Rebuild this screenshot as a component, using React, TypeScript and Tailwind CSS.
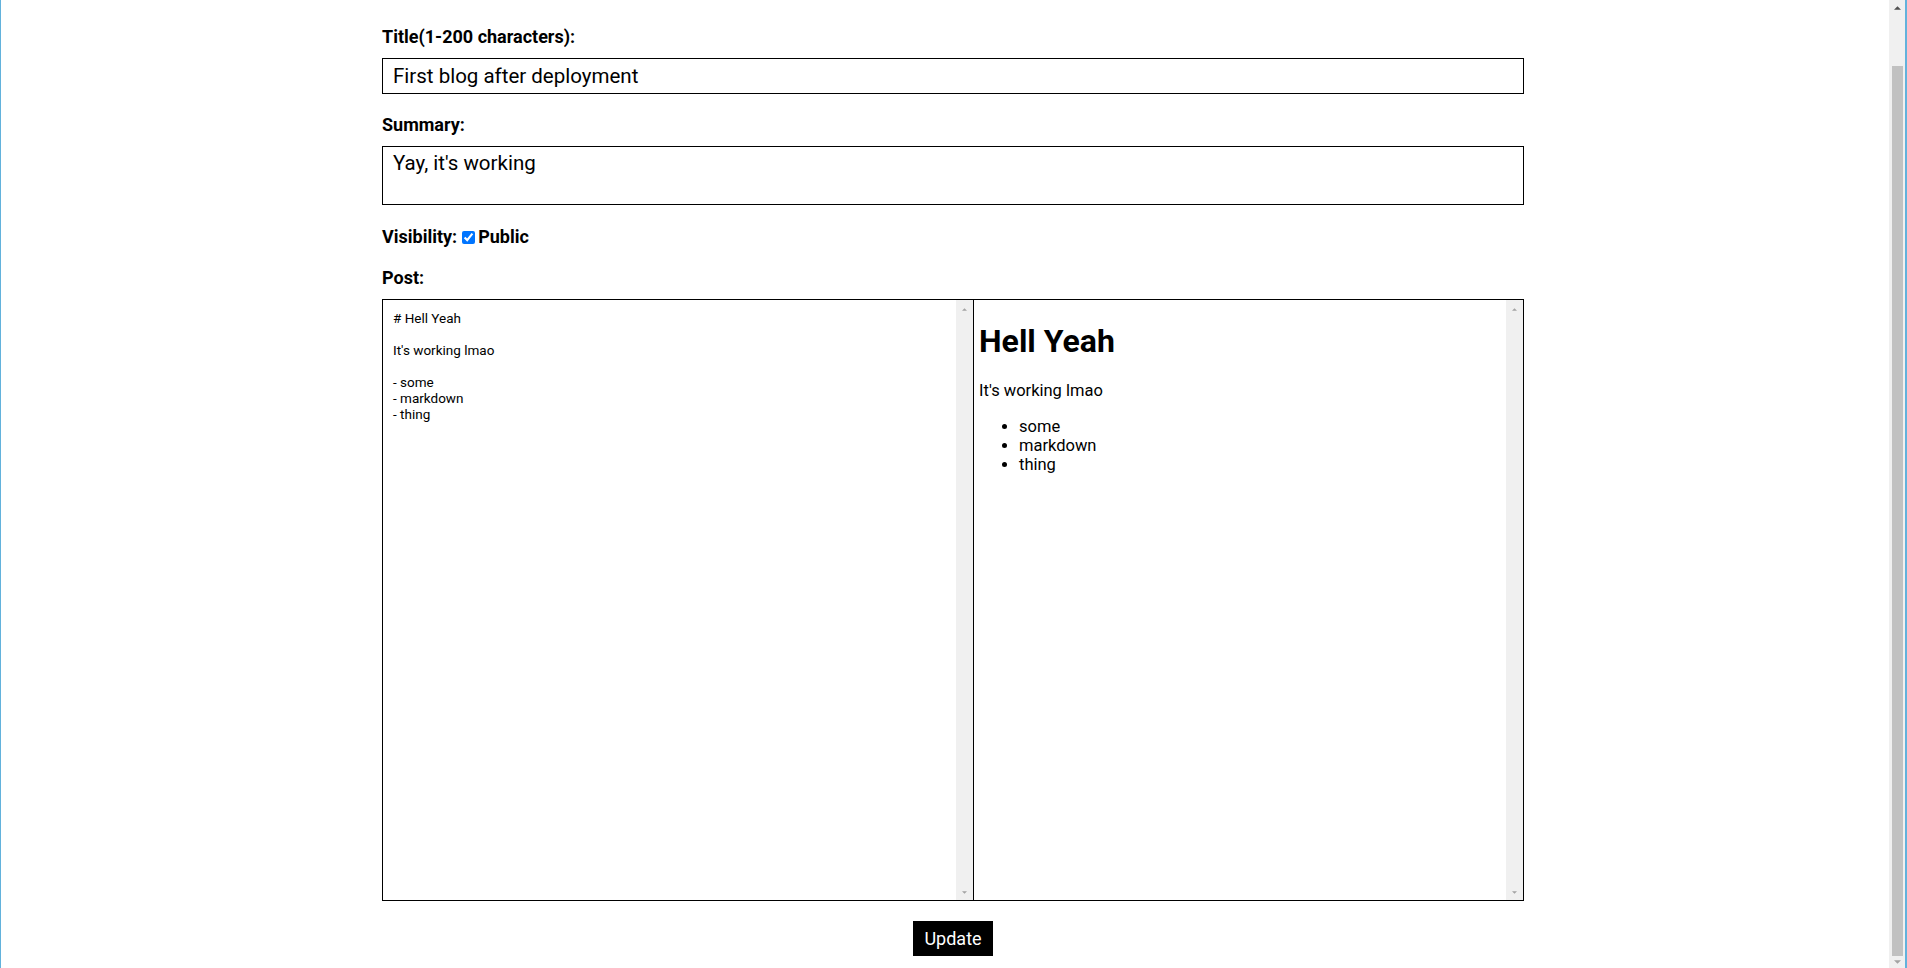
const markdown = `# Hell Yeah

It's working lmao

- some
- markdown
- thing`;

const Arrow = ({ up, className }: { up?: boolean; className: string }) => (
  <svg viewBox="0 0 6 3" className={className}>
    <polygon points={up ? "3,0 6,3 0,3" : "0,0 6,0 3,3"} fill="currentColor" />
  </svg>
);

// the grey empty track that sits beside the editor panes
const PaneScrollbar = () => (
  <div className="w-[17px] shrink-0 bg-[#f0f0f0] flex flex-col items-center justify-between pt-[8px] pb-[6px] text-[#a3a3a3]">
    <Arrow up className="w-[5px] h-[3px]" />
    <Arrow className="w-[5px] h-[3px]" />
  </div>
);

const Label = ({ text }: { text: string }) => (
  <label className="block text-[18px] font-bold leading-[19px] mb-[12px]">{text}</label>
);

const App = () => {
  return (
    <div className="h-screen flex overflow-hidden bg-white text-black border-l border-r-2 border-[#62b2dc] font-['Roboto',sans-serif]">
      <div className="flex-1">
        <form className="w-[1142px] ml-[381px] pt-[27px]" onSubmit={(e) => e.preventDefault()}>
          <div className="mb-[21px]">
            <Label text="Title(1-200 characters):" />
            <input
              type="text"
              defaultValue="First blog after deployment"
              className="block w-full h-[36px] border border-black px-[10px] text-[20.5px] outline-none"
            />
          </div>

          <div className="mb-[22px]">
            <Label text="Summary:" />
            <textarea
              defaultValue="Yay, it's working"
              className="block w-full h-[59px] border border-black px-[10px] pt-[4px] text-[20.5px] leading-[24px] resize-none outline-none"
            />
          </div>

          <div className="flex items-center h-[21px] mb-[20px] text-[18px] font-bold leading-[19px]">
            <span className="-mt-[2px]">Visibility:</span>
            <input type="checkbox" defaultChecked className="w-[13px] h-[13px] ml-[5px] mr-[3px] accent-[#0075ff]" />
            <span className="-mt-[2px]">Public</span>
          </div>

          <Label text="Post:" />
          <div className="flex h-[602px] border border-black">
            <div className="flex w-[590px]">
              <textarea
                defaultValue={markdown}
                className="flex-1 h-full px-[10px] pt-[10px] text-[13.5px] leading-[16px] resize-none outline-none overflow-hidden"
              />
              <PaneScrollbar />
            </div>
            <div className="flex flex-1 border-l border-black">
              <div className="flex-1 px-[5px] pt-[1px] text-[16.5px] leading-[19px]">
                <h1 className="text-[32px] leading-[normal] font-bold my-[21px]">Hell Yeah</h1>
                <p className="my-[16px]">It's working lmao</p>
                <ul className="list-disc pl-[40px] mt-[17px] mb-[16px]">
                  <li>some</li>
                  <li>markdown</li>
                  <li>thing</li>
                </ul>
              </div>
              <PaneScrollbar />
            </div>
          </div>

          <div className="flex justify-center mt-[20px]">
            <button type="submit" className="w-[80px] h-[35px] bg-black text-white text-[18px]">
              Update
            </button>
          </div>
        </form>
      </div>

      {/* page scrollbar, scrolled to the bottom */}
      <div className="w-[16px] shrink-0 bg-[#f0f0f0] flex flex-col items-center pt-[6px]">
        <Arrow up className="w-[7px] h-[4px] text-[#505050]" />
        <div className="w-[11px] h-[890px] mt-[56px] bg-[#c1c1c1]" />
        <Arrow className="w-[7px] h-[4px] mt-[4px] text-[#a3a3a3]" />
      </div>
    </div>
  );
};

export default App;
